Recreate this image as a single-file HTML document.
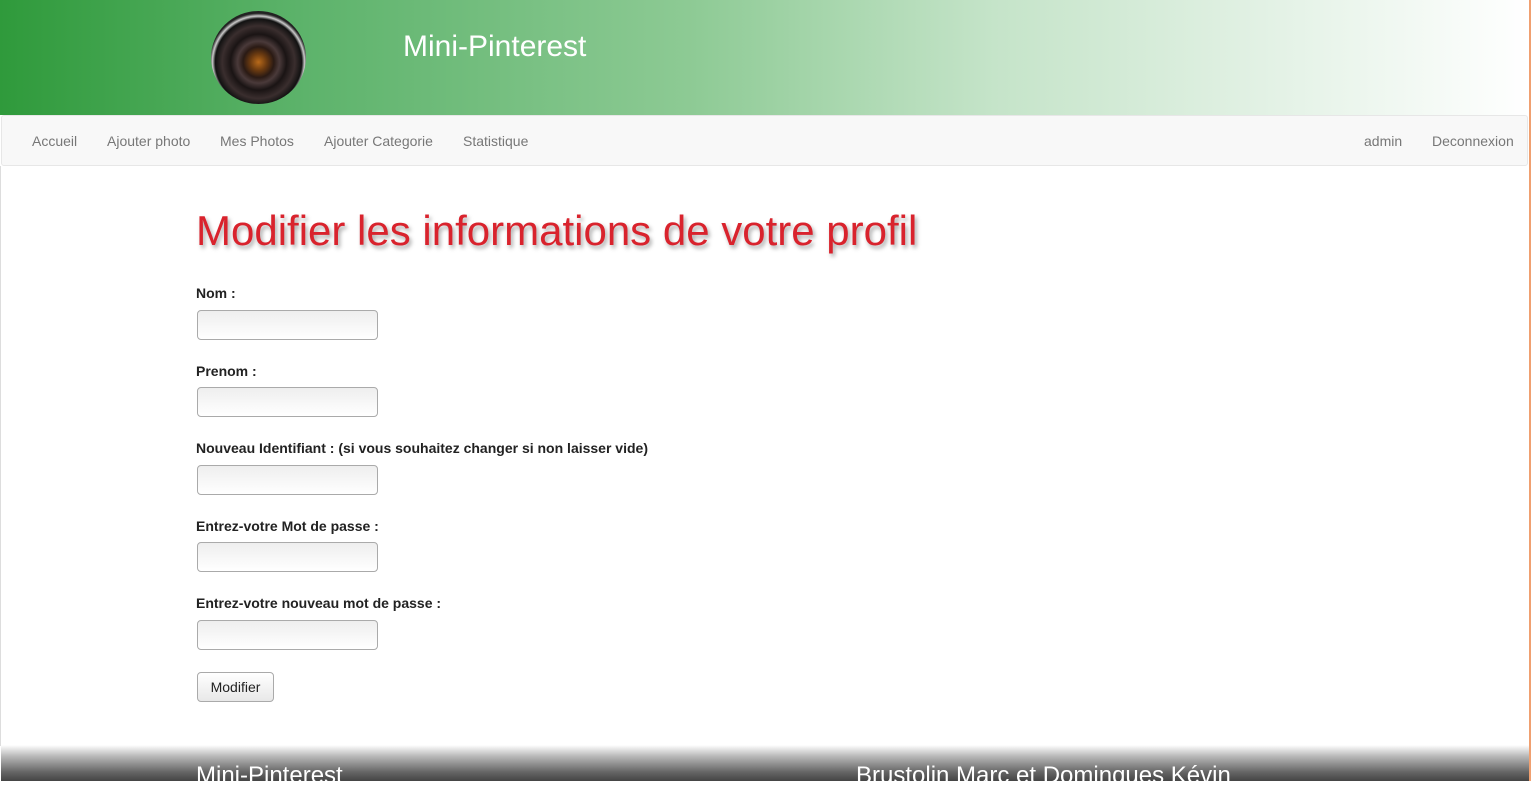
<!DOCTYPE html>
<html><head><meta charset="utf-8"><style>
*{box-sizing:border-box}
body{margin:0;width:1531px;height:781px;overflow:hidden;background:#fff;font-family:"Liberation Sans",Arial,sans-serif;position:relative}
.hdr{position:absolute;left:0;top:0;width:1529px;height:115px;background:linear-gradient(to right,#2f9a3b 0%,#5db36b 20%,#8dca94 45%,#c5e4c9 65%,#e6f3e8 85%,#fff 100%)}
.orl{position:absolute;left:1529px;top:0;width:2px;height:781px;background:#f0a070}
.lens{position:absolute;left:211px;top:11px;width:95px;height:93px;border-radius:50%;background:radial-gradient(circle at 50% 55%,#b86a1a 0,#6a3a10 12%,#2a1a14 22%,#4a3a3a 30%,#1a1414 40%,#3a2e2e 52%,#111 62%,#ccc 66%,#222 70%)}
.ttl{position:absolute;left:403px;top:30px;color:#fff;font-size:30px}
.nav{position:absolute;left:1px;top:115px;width:1527px;height:51px;background:#f8f8f8;border:1px solid #e7e7e7;border-radius:3px}
.nav span{position:absolute;top:17px;font-size:14px;color:#777}
.lb{position:absolute;left:0;top:166px;width:1px;height:580px;background:#ddd}
h1{position:absolute;left:196px;top:207px;margin:0;font-weight:normal;font-size:42px;color:#d9232d;text-shadow:2px 3px 4px rgba(0,0,0,.35)}
.l{position:absolute;left:196px;font-size:14px;font-weight:bold;color:#222}
.i{position:absolute;left:197px;width:181px;height:30px;border:1px solid #aaa;border-radius:4px;background:linear-gradient(#eee,#fff)}
.b{position:absolute;left:197px;top:672px;width:77px;height:30px;border:1px solid #aaa;border-radius:4px;background:linear-gradient(#fff,#e8e8e8);font-size:14px;color:#222;text-align:center;line-height:28px}
.ft{position:absolute;left:1px;top:745px;width:1528px;height:36px;background:linear-gradient(#fff 0%,#bbb 30%,#666 75%,#444 100%)}
.ft span{position:absolute;top:17px;color:#fff;font-size:24px}
</style></head><body>
<div class="hdr"></div><div class="orl"></div>
<div class="lens"></div>
<div class="ttl">Mini-Pinterest</div>
<div class="nav">
<span style="left:30px">Accueil</span><span style="left:105px">Ajouter photo</span><span style="left:218px">Mes Photos</span><span style="left:322px">Ajouter Categorie</span><span style="left:461px">Statistique</span>
<span style="left:1362px">admin</span><span style="left:1430px">Deconnexion</span>
</div>
<div class="lb"></div>
<h1>Modifier les informations de votre profil</h1>
<div class="l" style="top:285px">Nom :</div><div class="i" style="top:310px"></div>
<div class="l" style="top:363px">Prenom :</div><div class="i" style="top:387px"></div>
<div class="l" style="top:440px">Nouveau Identifiant : (si vous souhaitez changer si non laisser vide)</div><div class="i" style="top:465px"></div>
<div class="l" style="top:518px">Entrez-votre Mot de passe :</div><div class="i" style="top:542px"></div>
<div class="l" style="top:595px">Entrez-votre nouveau mot de passe :</div><div class="i" style="top:620px"></div>
<div class="b">Modifier</div>
<div class="ft"><span style="left:195px">Mini-Pinterest</span><span style="left:855px">Brustolin Marc et Domingues Kévin</span></div>
</body></html>
